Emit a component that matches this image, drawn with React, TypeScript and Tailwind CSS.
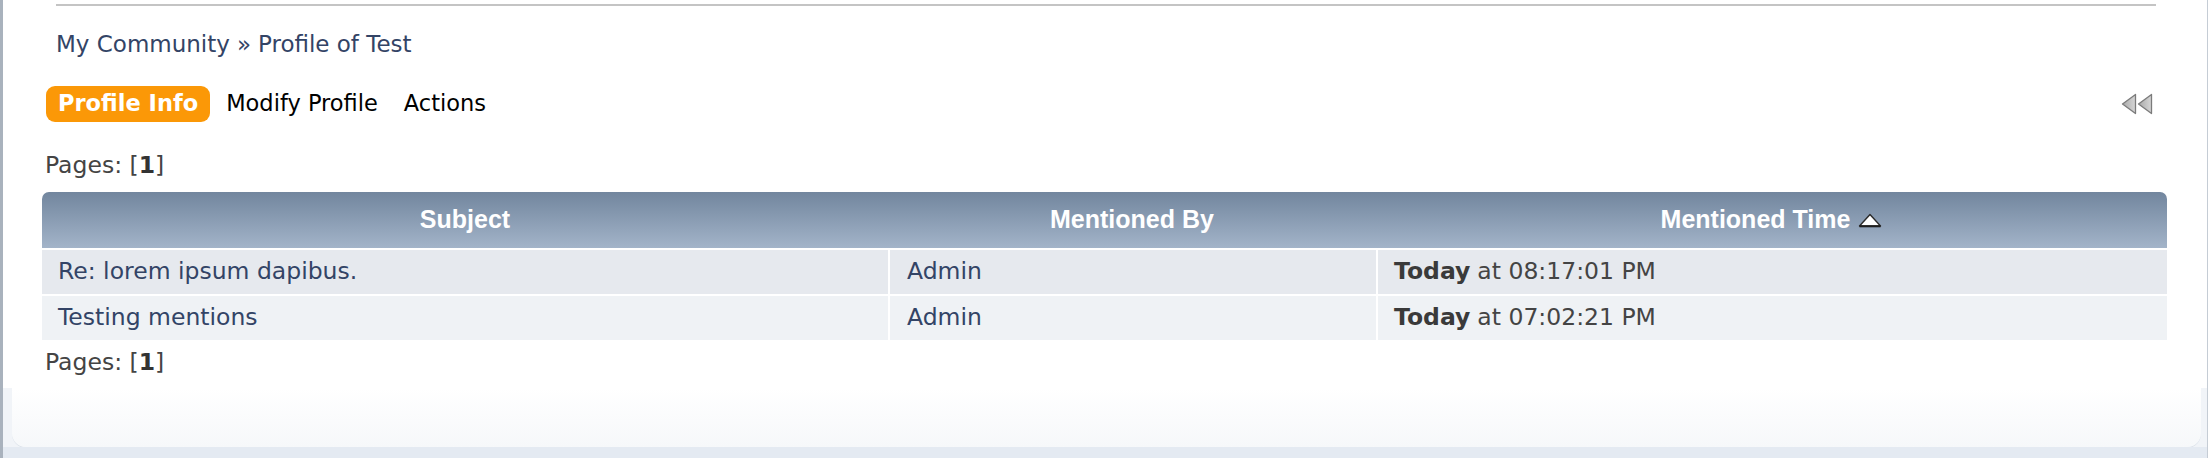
import * as React from "react";

const rows = [
  { subject: "Re: lorem ipsum dapibus.", by: "Admin", time: "08:17:01 PM", bg: "bg-[#e6e9ee]" },
  { subject: "Testing mentions", by: "Admin", time: "07:02:21 PM", bg: "bg-[#eff2f5]" },
];

function CollapseIcon() {
  // two grey left-pointing triangles (the "shrink" toggle)
  return (
    <svg width="32" height="22" viewBox="0 0 32 22" aria-hidden>
      <defs>
        <linearGradient id="tri" x1="0" y1="0" x2="1" y2="0">
          <stop offset="0" stopColor="#a9a9a9" />
          <stop offset="1" stopColor="#d6d6d6" />
        </linearGradient>
      </defs>
      <polygon points="1.5,11 14.5,1.5 14.5,20.5" fill="url(#tri)" stroke="#7b7b7b" strokeWidth="1.3" strokeLinejoin="round" />
      <polygon points="17.5,11 30.5,1.5 30.5,20.5" fill="url(#tri)" stroke="#7b7b7b" strokeWidth="1.3" strokeLinejoin="round" />
    </svg>
  );
}

function SortUp() {
  return (
    <svg width="24" height="15" viewBox="0 0 24 15" aria-hidden>
      <polygon points="12,1.5 22.5,13 1.5,13" fill="#fff" stroke="#2a2a2a" strokeWidth="1.4" strokeLinejoin="round" />
      <line x1="1.5" y1="13.3" x2="22.5" y2="13.3" stroke="#1e1e1e" strokeWidth="2" />
    </svg>
  );
}

function Pages() {
  return (
    <div className="h-[30px] flex items-center text-[23.5px] text-[#444]">
      Pages: [<b className="text-[#333]">1</b>]
    </div>
  );
}

export default function App() {
  return (
    <div
      className="w-[2208px] h-[458px] overflow-hidden bg-[#e4eaf2] border-l-[3px] border-r border-l-[#a9b2bd] border-r-[#c5ccd5] flex flex-col"
      style={{ fontFamily: '"DejaVu Sans", Verdana, sans-serif' }}
    >
      <div className="bg-white flex flex-col">
        <div className="mt-[4px] ml-[53px] mr-[51px] h-[2px] bg-[#c4c4c4]" />

        <nav className="mt-[23px] ml-[53px] h-[30px] flex items-center text-[23px] text-[#334466]">
          <a href="#">My Community</a>
          <span className="mx-[7px]">»</span>
          <a href="#">Profile of Test</a>
        </nav>

        <div className="mt-[27px] ml-[43px] mr-[54px] flex items-center">
          <span className="h-[36px] px-[12px] rounded-[9px] bg-[#fb9807] text-white font-bold text-[22.5px] flex items-center">
            Profile Info
          </span>
          <span className="ml-[16px] text-[22.5px] text-black">Modify Profile</span>
          <span className="ml-[26px] text-[22.5px] text-black">Actions</span>
          <span className="ml-auto">
            <CollapseIcon />
          </span>
        </div>

        <div className="mt-[29px] ml-[42px]">
          <Pages />
        </div>

        <div className="mt-[11px] ml-[39px] mr-[40px]">
          <div
            className="h-[56px] rounded-t-[7px] bg-gradient-to-b from-[#72869e] to-[#a3b4c9] grid grid-cols-[846px_488px_1fr] text-white font-bold text-[25px]"
            style={{ fontFamily: '"Liberation Sans", Arial, sans-serif' }}
          >
            <div className="flex items-center justify-center">Subject</div>
            <div className="flex items-center justify-center">Mentioned By</div>
            <div className="flex items-center justify-center gap-[8px]">
              Mentioned Time
              <SortUp />
            </div>
          </div>
          <div className="mt-[2px] grid grid-cols-[846px_486px_1fr] gap-[2px] text-[23.5px]">
            {rows.map((r) => (
              <React.Fragment key={r.subject}>
                <div className={`${r.bg} h-[44px] pl-[16px] flex items-center text-[#334466]`}>{r.subject}</div>
                <div className={`${r.bg} h-[44px] pl-[17px] flex items-center text-[#334466]`}>{r.by}</div>
                <div className={`${r.bg} h-[44px] pl-[16px] flex items-center text-[#444]`}>
                  <b className="mr-[7px] text-[#3a3a3a]">Today</b>at {r.time}
                </div>
              </React.Fragment>
            ))}
          </div>
        </div>

        <div className="mt-[8px] ml-[42px] mb-[10px]">
          <Pages />
        </div>
      </div>

      <div className="bg-[#f1f4f8] pl-[9px] pr-[6px]">
        <div className="h-[59px] rounded-b-[14px] bg-gradient-to-b from-white to-[#f6f8fa] shadow-[0_1px_0_#dde3ea]" />
      </div>
      <div className="flex-1 bg-[#e4eaf2]" />
    </div>
  );
}
